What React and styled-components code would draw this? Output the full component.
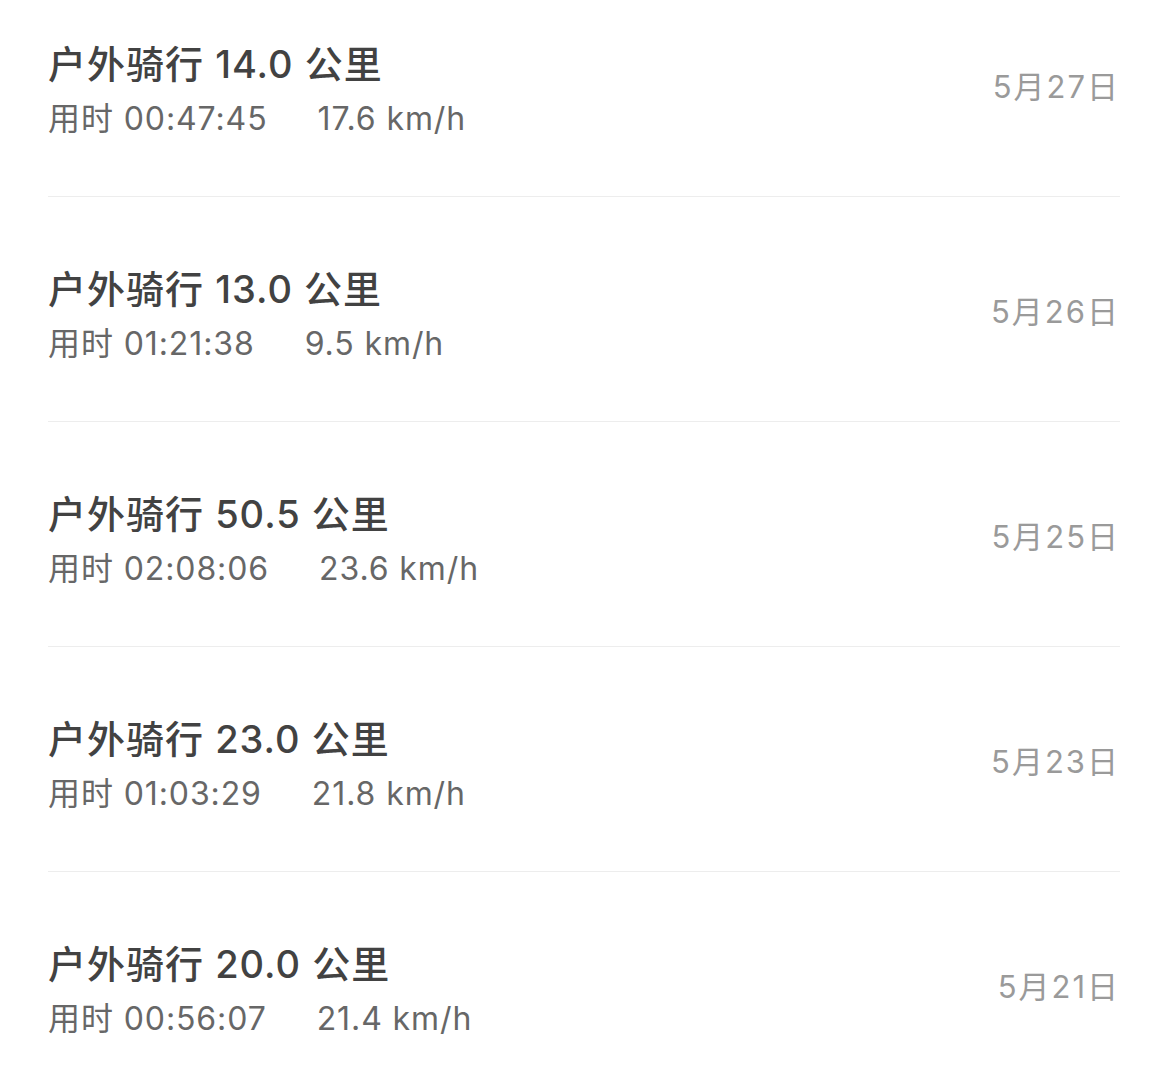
import React from "react";
import styled, { createGlobalStyle } from "styled-components";

const Global = createGlobalStyle`
  html, body { margin: 0; padding: 0; background: #ffffff; }
  body {
    font-family: Inter, "Noto Sans CJK SC", sans-serif;
    -webkit-font-smoothing: antialiased;
  }
`;

const List = styled.div`
  padding: 0 50px 0 48px;
  overflow: hidden;
  height: 1081px;
  box-sizing: border-box;
`;

const Row = styled.div`
  display: flex;
  justify-content: space-between;
  align-items: flex-start;
  box-sizing: border-box;
  height: 225px;
  padding-top: 68px;
  border-bottom: 1px solid #ededed;
  &:first-child {
    height: 197px;
    padding-top: 40px;
  }
`;

const Info = styled.div`
  display: flex;
  flex-direction: column;
  gap: 9px;
`;

const Title = styled.div`
  font-size: 38px;
  line-height: 48px;
  font-weight: 500;
  letter-spacing: 1px;
  color: #424242;
  white-space: pre;
`;

const Meta = styled.div`
  display: flex;
  font-size: 32px;
  line-height: 44px;
  letter-spacing: 0.9px;
  color: #676767;
  white-space: pre;
`;

const Speed = styled.span`
  margin-left: 50px;
`;

const DateText = styled.div`
  margin-top: 25px;
  font-size: 31px;
  line-height: 44px;
  color: #9a9a9a;
  letter-spacing: 2px;
  white-space: pre;
`;

const rides = [
  { km: "14.0", time: "00:47:45", speed: "17.6", date: "5月27日" },
  { km: "13.0", time: "01:21:38", speed: "9.5", date: "5月26日" },
  { km: "50.5", time: "02:08:06", speed: "23.6", date: "5月25日" },
  { km: "23.0", time: "01:03:29", speed: "21.8", date: "5月23日" },
  { km: "20.0", time: "00:56:07", speed: "21.4", date: "5月21日" },
];

export default function App() {
  return (
    <>
      <Global />
      <List>
        {rides.map((r) => (
          <Row key={r.date}>
            <Info>
              <Title>{`户外骑行 ${r.km} 公里`}</Title>
              <Meta>
                <span>{`用时 ${r.time}`}</span>
                <Speed>{`${r.speed} km/h`}</Speed>
              </Meta>
            </Info>
            <DateText>{r.date}</DateText>
          </Row>
        ))}
      </List>
    </>
  );
}
